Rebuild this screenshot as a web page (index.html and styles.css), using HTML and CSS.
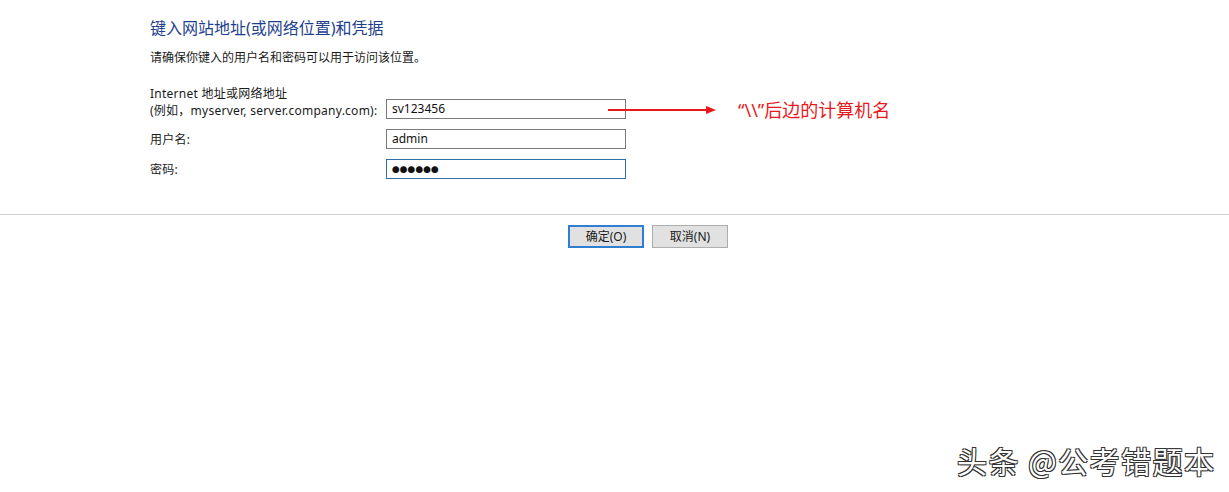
FILE: index.html
```html
<!DOCTYPE html>
<html lang="zh-CN">
<head>
<meta charset="utf-8">
<title>凭据</title>
<link rel="stylesheet" href="styles.css">
</head>
<body>
<div class="page">
  <div class="content">
    <h1 class="title">键入网站地址(或网络位置)和凭据</h1>
    <p class="subtitle">请确保你键入的用户名和密码可以用于访问该位置。</p>
    <div class="form">
      <div class="label label-two">Internet 地址或网络地址<br>(例如，myserver, server.company.com):</div>
      <div class="field field-first"><div class="input">sv123456</div></div>
      <div class="label">用户名:</div>
      <div class="field"><div class="input">admin</div></div>
      <div class="label">密码:</div>
      <div class="field"><div class="input focus"><span class="dots">●●●●●●</span></div></div>
    </div>
  </div>
  <div class="separator"></div>
  <div class="buttons">
    <div class="btn primary">确定(O)</div>
    <div class="btn">取消(N)</div>
  </div>
  <div class="annotation">
    <svg class="arrow" width="110" height="10" viewBox="0 0 110 10"><line x1="0" y1="5" x2="100" y2="5" stroke="#e8191c" stroke-width="2"/><polygon points="98,1 108,5 98,9" fill="#e8191c"/></svg>
    <span class="note">“\\”后边的计算机名</span>
  </div>
  <div class="watermark">头条 @公考错题本</div>
</div>
</body>
</html>
```
FILE: styles.css
```css
html, body {
  margin: 0;
  padding: 0;
  background: #ffffff;
}
.page {
  position: relative;
  width: 1229px;
  height: 492px;
  font-family: "Noto Sans", "Noto Sans CJK SC", sans-serif;
  font-size: 12px;
  color: #1a1a1a;
  overflow: hidden;
}
.content {
  padding: 18px 0 0 150px;
}
.title {
  margin: 0;
  font-size: 16px;
  font-weight: normal;
  color: #1e3f8f;
  line-height: 20px;
}
.subtitle {
  margin: 12px 0 0 0;
  line-height: 16px;
  font-size: 12px;
}
.form {
  margin-top: 19px;
  display: grid;
  grid-template-columns: 236px 240px;
  row-gap: 10px;
  align-items: end;
}
.label {
  line-height: 17px;
  font-size: 12px;
  letter-spacing: 0.25px;
  align-self: center;
}
.label-two {
  align-self: start;
}
.field-first {
  align-self: end;
}
.input {
  box-sizing: border-box;
  height: 20px;
  border: 1px solid #7a7a7a;
  padding: 0 5px;
  line-height: 18px;
  font-size: 12px;
  color: #111;
}
.input.focus {
  border-color: #2d6fa8;
}
.dots {
  font-size: 7.5px;
  letter-spacing: 0.3px;
  line-height: 18px;
}
.separator {
  margin-top: 35px;
  height: 1px;
  background: #cfcfcf;
}
.buttons {
  display: flex;
  gap: 8px;
  padding: 10px 0 0 568px;
}
.btn {
  box-sizing: border-box;
  width: 76px;
  height: 23px;
  border: 1px solid #adadad;
  background: #e1e1e1;
  font-size: 12px;
  line-height: 21px;
  text-align: center;
  color: #1a1a1a;
}
.btn.primary {
  border: 2px solid #2f7fd0;
  line-height: 19px;
}
.annotation {
  position: absolute;
  left: 608px;
  top: 100px;
  display: flex;
  align-items: center;
  gap: 20px;
}
.arrow {
  display: block;
}
.note {
  font-family: "Noto Sans", "Noto Sans CJK SC", sans-serif;
  font-size: 18px;
  color: #e8191c;
  line-height: 20px;
}
.watermark {
  position: absolute;
  left: 957px;
  top: 440px;
  font-family: "Noto Sans CJK SC", sans-serif;
  font-size: 30px;
  letter-spacing: 1.5px;
  line-height: 40px;
  color: #ffffff;
  text-shadow: -1px -1px 0 #333, 1px 1px 0 #333, 1px -1px 0 #333, -1px 1px 0 #333;
}
```
